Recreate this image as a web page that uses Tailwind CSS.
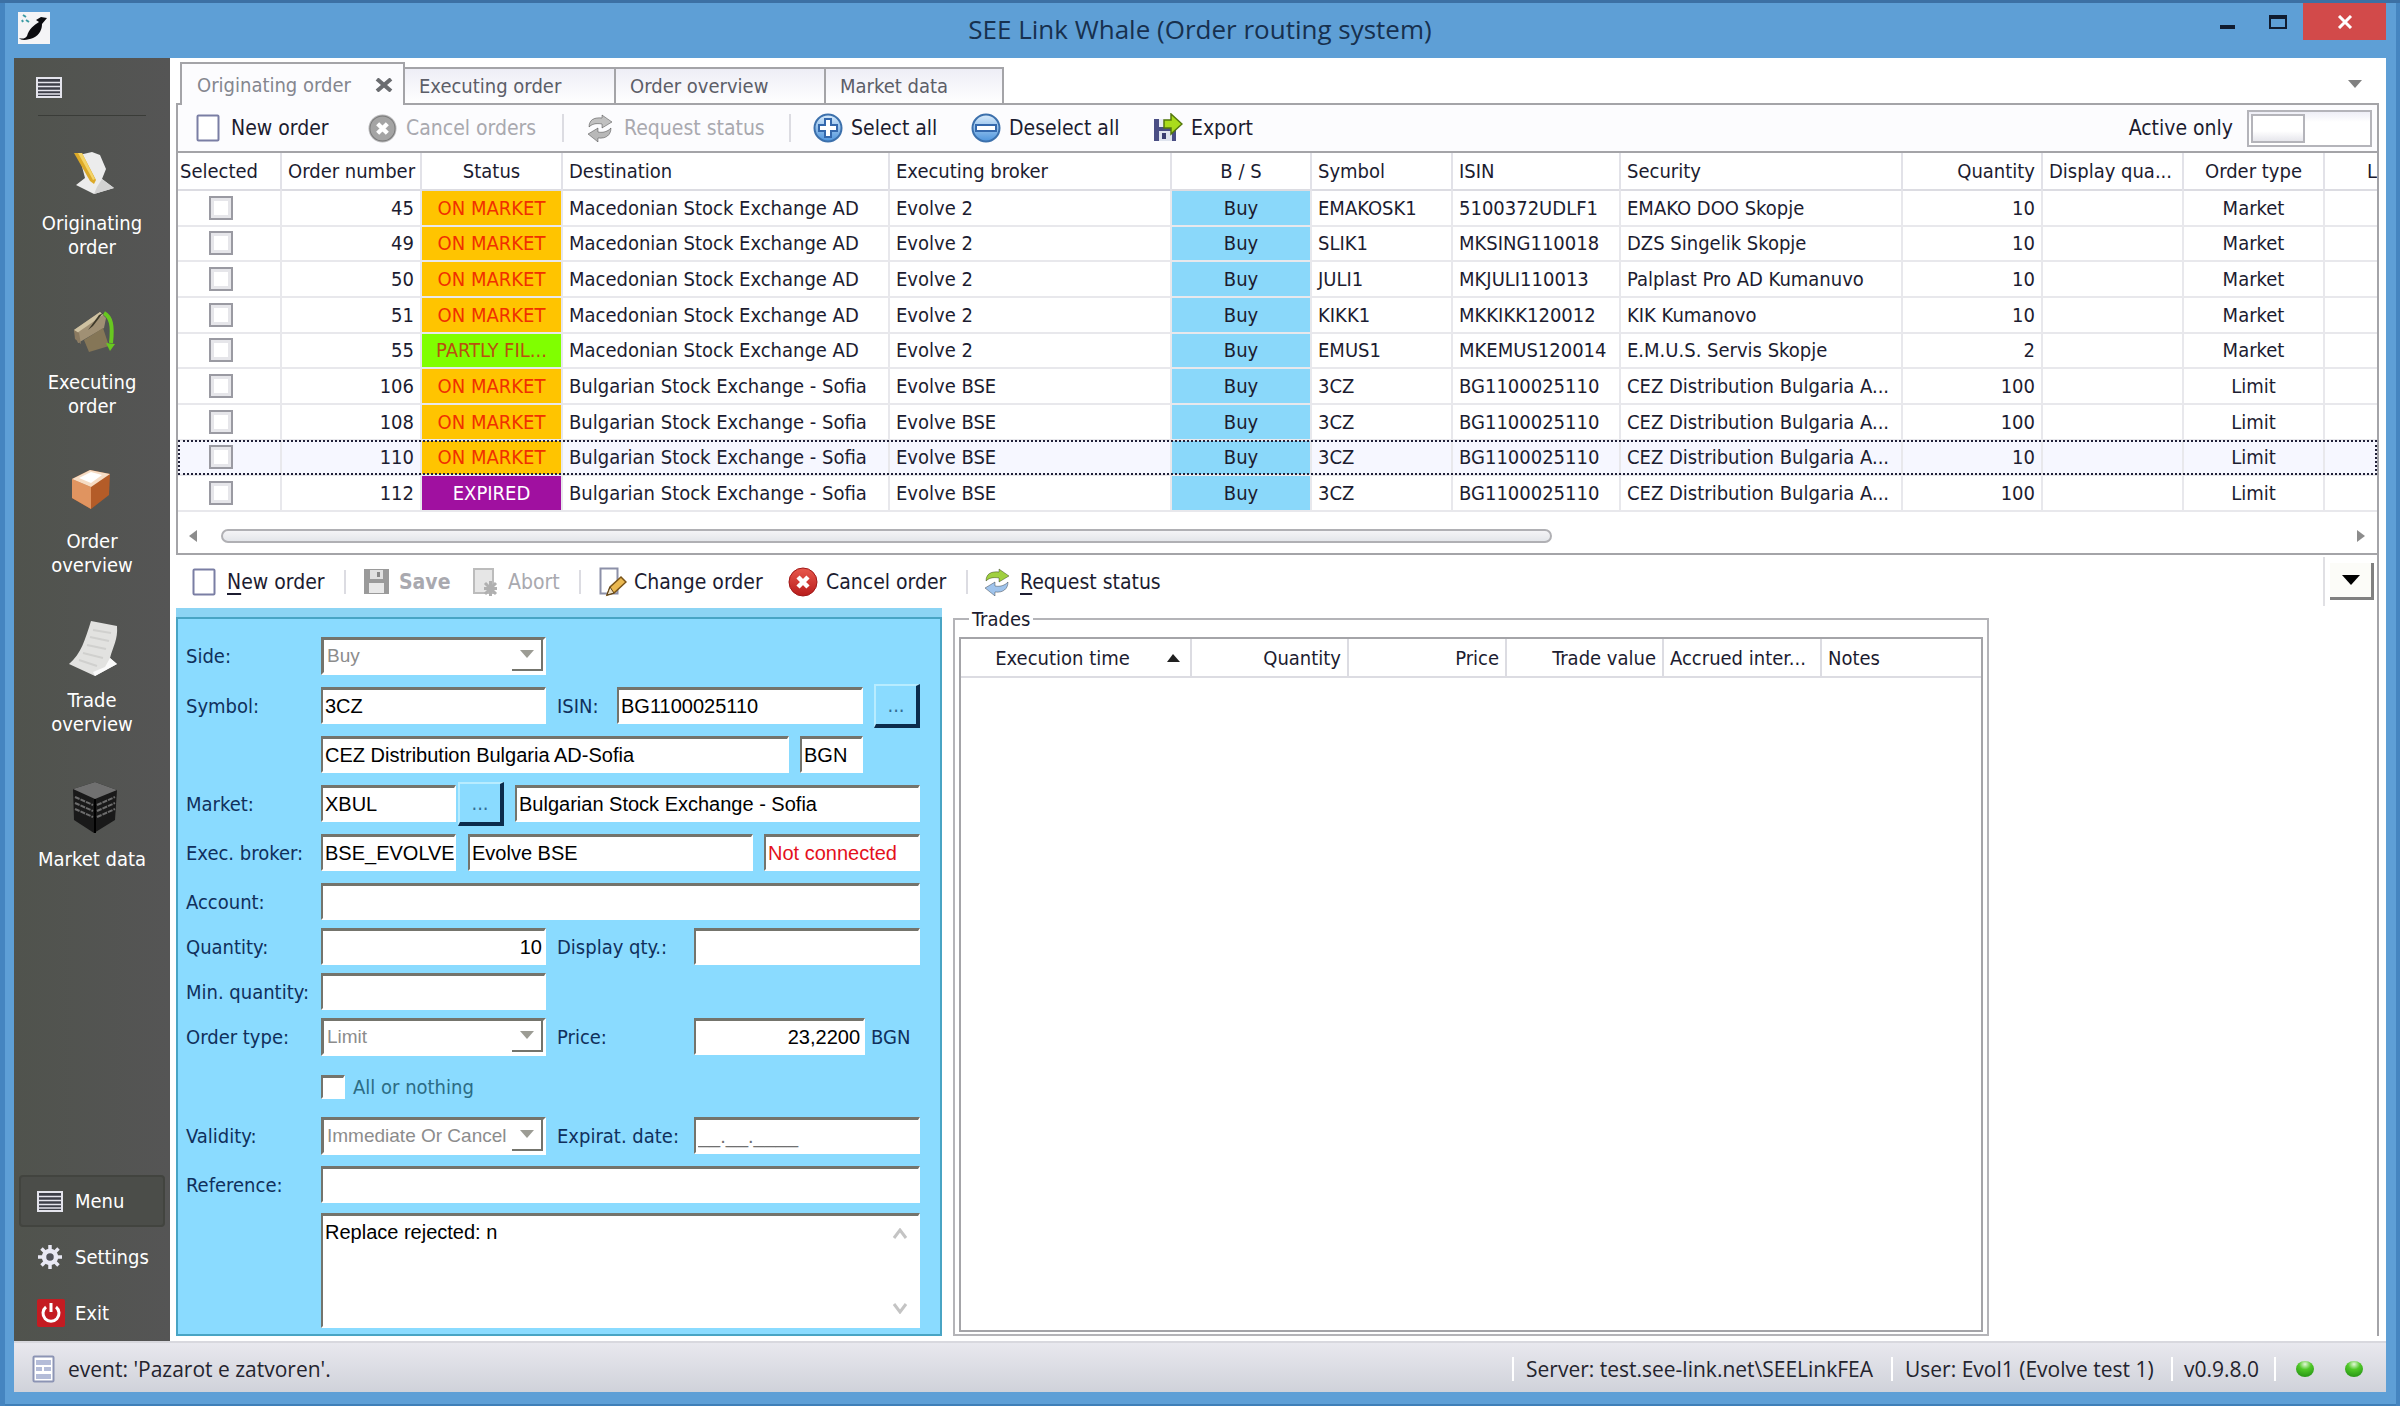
<!DOCTYPE html>
<html lang="en">

<head>
    <meta charset="UTF-8">
    <meta name="viewport" content="width=device-width, initial-scale=1.0">
    <title>SEE Link Whale (Order routing system)</title>
    <script src="https://cdn.jsdelivr.net/npm/@tailwindcss/browser@4"></script>
</head>

<body class="font-['DejaVu_Sans_Condensed','DejaVu_Sans',sans-serif] text-[20px] leading-6 text-[#1c1c30]">
    <!-- shared icons -->
    <svg class="absolute h-0 w-0">
        <defs>
            <linearGradient id="blueBall" x1="0" y1="0" x2="0" y2="1">
                <stop offset="0" stop-color="#d8ebfb" />
                <stop offset="1" stop-color="#4d94dc" />
            </linearGradient>
            <linearGradient id="redBall" x1="0" y1="0" x2="0" y2="1">
                <stop offset="0" stop-color="#e8584c" />
                <stop offset="1" stop-color="#b81c1c" />
            </linearGradient>
            <radialGradient id="greenBall" cx="50%" cy="20%" r="75%">
                <stop offset="0" stop-color="#e4f8d8" />
                <stop offset="0.45" stop-color="#50c828" />
                <stop offset="1" stop-color="#2c9c18" />
            </radialGradient>
        </defs>
        <symbol id="i-list" viewBox="0 0 26 21">
            <rect x="1" y="1" width="24" height="19" fill="#3c3e48" stroke="#e4e4ec" stroke-width="2" />
            <path d="M2 5.500h22M2 9.500h22M2 13.500h22M2 17h22" stroke="#e4e4ec" stroke-width="1.600" />
        </symbol>
        <symbol id="i-page" viewBox="0 0 24 28">
            <rect x="1.500" y="1.500" width="21" height="25" rx="1" fill="#fff" stroke="#7a7ea4" stroke-width="2" />
        </symbol>
        <symbol id="i-refresh" viewBox="0 0 26 28">
            <path d="M2 13C2 6 7 3 15 4V1l10 7-10 6v-4C9 9 5 10 2 13z" fill="currentColor" stroke="#0005" />
            <path class="text-(--second)" d="M24 14c0 7-5 11-13 10v4L1 20l10-6v4c6 1 10-1 13-4z" fill="currentColor" stroke="#0005" />
        </symbol>
        <symbol id="i-cross" viewBox="0 0 30 30">
            <circle cx="15" cy="15" r="13.500" fill="currentColor" stroke="#0004" stroke-width="2" />
            <path d="M10 10l10 10M20 10L10 20" stroke="#fff" stroke-width="4.500" />
        </symbol>
    </svg>

    <div class="flex min-h-screen flex-col border-t-[3px] border-[#3c70a4] bg-[#5e9fd6] shadow-[inset_5px_0_0_#4585c0,inset_-4px_0_0_#4585c0,inset_0_-3px_0_#3f7fb8]">
        <header class="grid h-[55px] grid-cols-[1fr_auto_1fr] px-[14px]">
            <div class="pt-[9px] pl-1">
                <svg class="h-[32px] w-[32px]" viewBox="0 0 32 32">
                    <rect width="32" height="32" fill="#f4f4f6" />
                    <path d="M1 26c2 3 9 2 14 0 7-3 9-9 9-14l5-6-6-1-5 3 3 2c-5 3-10 7-12 14-2 3-5 3-8 2z" fill="#0c0c10" />
                    <path d="M5 3l3 2M8 8l3 2M4 8l1 2" stroke="#3a9aa4" stroke-width="2" />
                </svg>
            </div>
            <h1 class="pt-[8px] font-['Open_Sans','Noto_Sans',sans-serif] text-[26px] leading-9 text-[#17304e]">SEE Link Whale (Order routing system)</h1>
            <div class="flex items-start justify-end">
                <button aria-label="Minimize" class="flex h-[37px] w-[48px] items-center justify-center">
                    <svg class="h-[16px] w-[18px]"><rect x="1" y="11" width="15" height="4" fill="#101c30" /></svg>
                </button>
                <button aria-label="Maximize" class="flex h-[37px] w-[51px] items-center justify-center">
                    <svg class="h-[16px] w-[20px]"><path d="M2 2h16v12H2z" fill="none" stroke="#101c30" stroke-width="2" /><path d="M1 3h18" stroke="#101c30" stroke-width="4" /></svg>
                </button>
                <button aria-label="Close" class="flex h-[37px] w-[83px] items-center justify-center bg-[#d24a4a]">
                    <svg class="h-[14px] w-[16px]"><path d="M2 1l12 12M14 1L2 13" stroke="#fff" stroke-width="3" /></svg>
                </button>
            </div>
        </header>

        <div class="mx-[14px] flex flex-1 bg-white">
            <nav class="flex w-[156px] shrink-0 flex-col bg-linear-to-r from-[#50534d] to-[#555555] text-white">
                <button aria-label="Collapse menu" class="mt-[19px] ml-[22px] h-[21px] w-[26px]"><svg class="h-[21px] w-[26px]"><use href="#i-list" /></svg></button>
                <hr class="mx-[24px] mt-[17px] mb-[25px] border-[#3a3c38]">

                <button class="flex h-[159px] flex-col items-center gap-[10px]">
                    <svg class="h-[60px] w-[60px]" viewBox="0 0 60 60">
                        <path d="M17 14L30 11L38 14L44 28L40 38L52 47L32 53L14 44L23 37z" fill="#ececec" />
                        <path d="M32 53l20-6-12-9-5 8z" fill="#d2d2d2" />
                        <path d="M12 12l8 0 14 27-2 4-4-3z" fill="#dca928" />
                        <path d="M16 12l4 0 13 26-2 1z" fill="#f4d468" />
                    </svg>
                    <span>Originating<br>order</span>
                </button>
                <button class="flex h-[159px] flex-col items-center gap-[10px]">
                    <svg class="h-[60px] w-[60px]" viewBox="0 0 60 60">
                        <path d="M12 30l26-18 6 6-2 10-26 15z" fill="#a09074" />
                        <path d="M12 30l26-18 3 3-26 18z" fill="#cfc2a2" />
                        <path d="M12 30l5 3 2 11-6-5z" fill="#8b7a60" />
                        <path d="M22 40l19-12 6 18-20 6z" fill="#857657" />
                        <path d="M26 30l5-4 10-13-4 2z" fill="#3e3a2a" />
                        <path d="M42 13c7 4 9 12 7 30" fill="none" stroke="#68c820" stroke-width="4" />
                        <path d="M44 43l9 1-5 7z" fill="#68c820" />
                    </svg>
                    <span>Executing<br>order</span>
                </button>
                <button class="flex h-[159px] flex-col items-center gap-[10px]">
                    <svg class="h-[60px] w-[60px]" viewBox="0 0 60 60">
                        <path d="M10 20L28 11L48 15L47 36L29 50L10 39z" fill="#b45c28" />
                        <path d="M10 20l19 8v22L10 39z" fill="#e09460" />
                        <path d="M10 20L28 11L48 15L29 28z" fill="#f6dcc4" />
                        <path d="M17 19l12-6 11 3-11 8z" fill="#fff" />
                    </svg>
                    <span>Order<br>overview</span>
                </button>
                <button class="flex h-[159px] flex-col items-center gap-[10px]">
                    <svg class="h-[60px] w-[60px]" viewBox="0 0 60 60">
                        <path d="M29 3l26 5c1 14-4 20-7 32l7 6-22 12L7 46C19 36 23 22 29 3z" fill="#e2e2e0" />
                        <path d="M48 40l7 6-22 12-2-4 12-5z" fill="#fafafa" />
                        <path d="M31 12l18 3M28 19l19 4M25 27l19 4M21 35l20 5M17 42l18 6" stroke="#d0d0ce" stroke-width="2" />
                    </svg>
                    <span>Trade<br>overview</span>
                </button>
                <button class="flex h-[135px] flex-col items-center gap-[10px]">
                    <svg class="h-[60px] w-[60px]" viewBox="0 0 60 60">
                        <path d="M11 12L33 5L55 13L53 43L32 56L12 43z" fill="#191919" />
                        <path d="M11 12L33 5L55 13L33 22z" fill="#707070" />
                        <path d="M13 20l18 8M13 26l18 8M13 32l18 8M35 28l18-8M35 34l18-8M35 40l18-8" stroke="#6c6c6c" stroke-width="2" stroke-dasharray="5 1" />
                        <path d="M33 22v34" stroke="#000" stroke-width="2" />
                    </svg>
                    <span>Market data</span>
                </button>

                <div class="mt-auto flex flex-col gap-1 px-[5px] pb-0.5">
                    <button class="flex h-[52px] items-center gap-[12px] rounded-sm border-2 border-[#42443f] bg-[#4b4d49] pl-[16px]">
                        <svg class="h-[21px] w-[26px]"><use href="#i-list" /></svg>Menu
                    </button>
                    <button class="flex h-[52px] items-center gap-[12px] pl-[18px]">
                        <svg class="h-[26px] w-[26px]" viewBox="0 0 26 26">
                            <path d="M13 1v24M1 13h24M4.500 4.500l17 17M21.500 4.500l-17 17" stroke="#e8e8f4" stroke-width="3.500" />
                            <circle cx="13" cy="13" r="6" fill="#50525a" stroke="#e8e8f4" stroke-width="4.500" />
                        </svg>Settings
                    </button>
                    <button class="flex h-[52px] items-center gap-[10px] pl-[18px]">
                        <svg class="h-[28px] w-[28px]" viewBox="0 0 28 28">
                            <rect width="28" height="28" rx="2" fill="#c41c22" />
                            <path d="M9 8a8 8 0 1 0 10 0" fill="none" stroke="#fff" stroke-width="3" />
                            <path d="M14 4v9" stroke="#fff" stroke-width="3" />
                        </svg>Exit
                    </button>
                </div>
            </nav>

            <main class="flex min-w-0 flex-1 flex-col pt-1 pr-[7px] pb-[5px] pl-[6px]">
                <!-- tabs -->
                <div class="flex h-[43px] items-end border-b-2 border-[#a4a4a8] pl-[4px] text-[#5c5e68]">
                    <button class="-mb-0.5 flex h-[43px] w-[225px] items-center justify-between border-2 border-b-0 border-[#a4a4a8] bg-[#fcfcfe] pr-[10px] pl-[15px] text-[#84868e]">
                        Originating order
                        <svg class="h-[14px] w-[18px]" viewBox="0 0 18 14"><path d="M2 1l14 12M16 1L2 13" stroke="#6a6c70" stroke-width="4" /></svg>
                    </button>
                    <button class="h-[36px] w-[211px] border-t-2 border-r-2 border-[#a4a4a8] bg-linear-to-b from-[#eeeef6] to-white pl-[14px] text-left">Executing order</button>
                    <button class="h-[36px] w-[210px] border-t-2 border-r-2 border-[#a4a4a8] bg-linear-to-b from-[#eeeef6] to-white pl-[14px] text-left">Order overview</button>
                    <button class="h-[36px] w-[178px] border-t-2 border-r-2 border-[#a4a4a8] bg-linear-to-b from-[#eeeef6] to-white pl-[14px] text-left">Market data</button>
                    <button aria-label="Tab list" class="mr-[17px] mb-[15px] ml-auto"><svg class="h-[8px] w-[14px]"><path d="M0 0h14l-7 8z" fill="#808080" /></svg></button>
                </div>

                <section class="border-x-2 border-b-2 border-[#a4a4a8]">
                    <div class="flex h-[46px] items-center bg-[#fcfcfe] pl-[18px] text-[21px]">
                        <button class="flex w-[172px] items-center gap-[11px]"><svg class="h-[28px] w-[24px]"><use href="#i-page" /></svg>New order</button>
                        <button disabled class="flex w-[194px] items-center gap-[9px] text-[#a9a9af]"><svg class="h-[29px] w-[29px] text-[#a4a4a4]"><use href="#i-cross" /></svg>Cancel orders</button>
                        <span class="h-[28px] w-0.5 bg-[#dcdce2]"></span>
                        <button disabled class="ml-[23px] flex w-[202px] items-center gap-[11px] text-[#a9a9af]"><svg class="h-[28px] w-[26px] text-[#c0c0c0] [--second:#b8b8b8]"><use href="#i-refresh" /></svg>Request status</button>
                        <span class="h-[28px] w-0.5 bg-[#dcdce2]"></span>
                        <button class="ml-[22px] flex w-[158px] items-center gap-[8px]">
                            <svg class="h-[30px] w-[30px]" viewBox="0 0 30 30">
                                <circle cx="15" cy="15" r="13.500" fill="url(#blueBall)" stroke="#3c70ac" stroke-width="2" />
                                <path d="M12 6h6v6h6v6h-6v6h-6v-6H6v-6h6z" fill="#fff" stroke="#3468ac" stroke-width="2" />
                            </svg>Select all
                        </button>
                        <button class="flex w-[182px] items-center gap-[8px]">
                            <svg class="h-[30px] w-[30px]" viewBox="0 0 30 30">
                                <circle cx="15" cy="15" r="13.500" fill="url(#blueBall)" stroke="#3c70ac" stroke-width="2" />
                                <path d="M5 12h20v6H5z" fill="#fff" stroke="#3468ac" stroke-width="2" />
                            </svg>Deselect all
                        </button>
                        <button class="flex items-center gap-[8px]">
                            <svg class="h-[30px] w-[30px]" viewBox="0 0 30 30">
                                <path d="M1 6h22v22H1z" fill="#4a4e84" />
                                <path d="M6 6h12v8H6z" fill="#e8ecf4" />
                                <path d="M6 18h13v10H6z" fill="#dfe4ee" />
                                <path d="M9 20h4v6H9z" fill="#3a3e70" />
                                <path d="M11 7h7V1l11 10-11 10v-6h-7z" fill="#aadc1c" stroke="#54780c" stroke-width="1.500" />
                            </svg>Export
                        </button>
                        <label for="activeOnly" class="ml-auto">Active only</label>
                        <span class="relative mr-[5px] ml-[14px] h-[37px] w-[125px]">
                            <input id="activeOnly" type="checkbox" role="switch" class="h-full w-full appearance-none border-2 border-[#b4b4ba] bg-linear-to-b from-[#eeeef6] to-white to-30%">
                            <span class="pointer-events-none absolute top-1 left-1 h-[29px] w-[54px] border-2 border-[#b4b4ba] bg-linear-to-b from-white from-60% to-[#e6e6ec]"></span>
                        </span>
                    </div>

                    <div class="overflow-hidden border-t-2 border-[#a4a4a8]">
                        <table class="h-[359px] w-full table-fixed border-collapse whitespace-nowrap">
                            <colgroup>
                                <col class="w-[103px]"><col class="w-[140px]"><col class="w-[141px]"><col class="w-[327px]"><col class="w-[282px]">
                                <col class="w-[140px]"><col class="w-[141px]"><col class="w-[168px]"><col class="w-[282px]"><col class="w-[140px]">
                                <col class="w-[141px]"><col class="w-[141px]"><col>
                            </colgroup>
                            <thead>
                                <tr class="h-[37px] border-b-2 border-[#dcdce2] *:border-r-2 *:border-[#e2e2e8] *:px-[6px] *:font-normal">
                                    <th class="pl-[2px]! text-left">Selected</th>
                                    <th class="text-right">Order number</th>
                                    <th>Status</th>
                                    <th class="text-left">Destination</th>
                                    <th class="text-left">Executing broker</th>
                                    <th>B / S</th>
                                    <th class="text-left">Symbol</th>
                                    <th class="text-left">ISIN</th>
                                    <th class="text-left">Security</th>
                                    <th class="text-right">Quantity</th>
                                    <th class="text-left">Display qua...</th>
                                    <th>Order type</th>
                                    <th class="border-r-0! pr-0! text-right">L</th>
                                </tr>
                            </thead>
                            <tbody id="orders"></tbody>
                        </table>
                    </div>

                    <!-- horizontal scrollbar -->
                    <div class="flex h-[41px] items-center justify-between pt-[7px] pr-[12px] pl-[11px]">
                        <svg class="h-[12px] w-[8px]"><path d="M8 0v12L0 6z" fill="#8c8c8c" /></svg>
                        <div class="mx-[24px] flex-1"><div class="h-[14px] w-[63%] rounded-full border-2 border-[#b0b0b4] bg-linear-to-b from-[#f4f4f6] to-[#e4e6ea]"></div></div>
                        <svg class="h-[12px] w-[8px]"><path d="M0 0v12l8-6z" fill="#8c8c8c" /></svg>
                    </div>
                </section>

                <section class="flex flex-1 flex-col border-r-2 border-[#a4a4a8]">
                    <div class="flex h-[53px] items-center pl-[16px] text-[21px]">
                        <button class="flex w-[152px] items-center gap-[11px]"><svg class="h-[28px] w-[24px]"><use href="#i-page" /></svg><span><u class="underline-offset-4">N</u>ew order</span></button>
                        <span class="h-[24px] w-0.5 bg-[#dcdce2]"></span>
                        <button disabled class="ml-[17px] flex w-[110px] items-center gap-[9px] font-bold text-[#a9a9af]">
                            <svg class="h-[27px] w-[27px]" viewBox="0 0 27 27">
                                <path d="M1 1h25v25H1z" fill="#9a9a9a" />
                                <path d="M7 2h13v9H7z" fill="#e0e0e0" />
                                <path d="M14 4h3v5h-3z" fill="#888" />
                                <path d="M6 15h15v10H6z" fill="#e8e8e8" />
                            </svg>Save
                        </button>
                        <button disabled class="flex w-[106px] items-center gap-[9px] text-[#a9a9af]">
                            <svg class="h-[28px] w-[26px]" viewBox="0 0 26 28">
                                <path d="M1 1h19v24H1z" fill="#e6e6e6" stroke="#bcbcbc" stroke-width="2" />
                                <path d="M12 15l11 11M23 15L12 26M17.500 13v15M11 20.500h13" stroke="#b0b0b0" stroke-width="3" />
                            </svg>Abort
                        </button>
                        <span class="h-[24px] w-0.5 bg-[#dcdce2]"></span>
                        <button class="ml-[18px] flex w-[189px] items-center gap-[7px]">
                            <svg class="h-[30px] w-[28px]" viewBox="0 0 28 30">
                                <path d="M1.500 1.500h17v25h-17z" fill="#fff" stroke="#8c90a8" stroke-width="2" />
                                <path d="M8 28l3-8 11-10 5 5-12 11z" fill="#eab850" stroke="#7a5418" stroke-width="1.500" />
                                <path d="M8 28l3-8 4 6z" fill="#eee0c4" stroke="#5c4014" />
                            </svg>Change order
                        </button>
                        <button class="flex w-[178px] items-center gap-[8px]">
                            <svg class="h-[30px] w-[30px]" viewBox="0 0 30 30">
                                <circle cx="15" cy="15" r="14" fill="url(#redBall)" stroke="#a01818" />
                                <path d="M10 10l10 10M20 10L10 20" stroke="#fff" stroke-width="4.500" />
                            </svg>Cancel order
                        </button>
                        <span class="h-[24px] w-0.5 bg-[#dcdce2]"></span>
                        <button class="ml-[16px] flex items-center gap-[10px]"><svg class="h-[28px] w-[26px] text-[#a0d040] [--second:#a0c4ec]"><use href="#i-refresh" /></svg><span><u class="underline-offset-4">R</u>equest status</span></button>
                        <div class="mr-[3px] ml-auto border-l-2 border-[#e0e0e4] py-[6px] pl-[5px]">
                            <button aria-label="Toolbar options" class="flex h-[37px] w-[44px] items-center justify-center border-r-3 border-b-3 border-[#808080] bg-[#fcfcf8]">
                                <svg class="h-[10px] w-[18px]"><path d="M0 0h18l-9 10z" fill="#000" /></svg>
                            </button>
                        </div>
                    </div>

                    <div class="flex flex-1 items-stretch">
                        <!-- order ticket -->
                        <form class="flex w-[766px] shrink-0 flex-col border-t-9 border-[#8cd4f4] bg-[#8adbff] text-[#10305c]">
                            <div class="flex flex-1 flex-col border-2 border-[#48a4c4] px-[8px] pt-[18px] pb-[6px] *:flex *:h-[37px] *:items-center
                                [&_input:not([type=checkbox])]:h-[37px] [&_input]:border-2 [&_input]:border-t-3 [&_input]:border-white [&_input]:border-t-[#74746c] [&_input]:border-l-[#74746c] [&_input]:bg-white
                                [&_input]:pl-0.5 [&_input]:font-['Liberation_Sans',Arial,sans-serif] [&_input]:text-black
                                [&_select]:h-[38px] [&_select]:w-full [&_select]:appearance-none [&_select]:border-3 [&_select]:border-white [&_select]:border-t-[#74746c] [&_select]:border-l-[#74746c] [&_select]:bg-white [&_select]:pl-[3px] [&_select]:font-['Liberation_Sans',Arial,sans-serif] [&_select]:text-[19px] [&_select]:text-[#8c8c8c] [&_select]:opacity-100">
                                <div>
                                    <label for="side" class="w-[135px]">Side:</label>
                                    <span class="relative w-[225px]">
                                        <select id="side" disabled><option>Buy</option></select>
                                        <span class="pointer-events-none absolute top-[3px] right-[3px] flex h-[31px] w-[31px] items-center justify-center border-r-2 border-b-2 border-[#74746c] bg-white"><svg class="h-[8px] w-[14px]"><path d="M0 0h14l-7 8z" fill="#9c9c94" /></svg></span>
                                    </span>
                                </div>
                                <div class="mt-[13px]">
                                    <label for="symbol" class="w-[135px]">Symbol:</label>
                                    <input id="symbol" value="3CZ" class="w-[225px]">
                                    <label for="isin" class="ml-[11px] w-[60px]">ISIN:</label>
                                    <input id="isin" value="BG1100025110" class="w-[246px]">
                                    <button type="button" class="ml-[11px] h-[44px] w-[46px] border-2 border-r-4 border-b-4 border-[#b8ecff] border-r-[#0c2c4c] border-b-[#0c2c4c] text-[#346c94]">...</button>
                                </div>
                                <div class="mt-[12px] pl-[135px]">
                                    <input aria-label="Security name" value="CEZ Distribution Bulgaria AD-Sofia" class="w-[468px]">
                                    <input aria-label="Currency" value="BGN" class="ml-[11px] w-[63px]">
                                </div>
                                <div class="mt-[12px]">
                                    <label for="market" class="w-[135px]">Market:</label>
                                    <input id="market" value="XBUL" class="w-[135px]">
                                    <button type="button" class="ml-0.5 h-[44px] w-[46px] border-2 border-r-4 border-b-4 border-[#b8ecff] border-r-[#0c2c4c] border-b-[#0c2c4c] text-[#346c94]">...</button>
                                    <input aria-label="Market name" value="Bulgarian Stock Exchange - Sofia" class="ml-[11px] w-[405px]">
                                </div>
                                <div class="mt-[12px]">
                                    <label for="broker" class="w-[135px]">Exec. broker:</label>
                                    <input id="broker" value="BSE_EVOLVE" class="w-[135px]">
                                    <input aria-label="Broker name" value="Evolve BSE" class="ml-[12px] w-[285px]">
                                    <input aria-label="Broker status" value="Not connected" class="ml-[11px] w-[156px] text-[#e4101c]!">
                                </div>
                                <div class="mt-[12px]">
                                    <label for="account" class="w-[135px]">Account:</label>
                                    <input id="account" class="w-[599px]">
                                </div>
                                <div class="mt-[8px]">
                                    <label for="quantity" class="w-[135px]">Quantity:</label>
                                    <input id="quantity" value="10" class="w-[225px] pr-0.5 text-right">
                                    <label for="displayQty" class="ml-[11px] w-[137px]">Display qty.:</label>
                                    <input id="displayQty" class="w-[226px]">
                                </div>
                                <div class="mt-[8px]">
                                    <label for="minQuantity" class="w-[135px] whitespace-nowrap">Min. quantity:</label>
                                    <input id="minQuantity" class="w-[225px]">
                                </div>
                                <div class="mt-[8px]">
                                    <label for="orderType" class="w-[135px]">Order type:</label>
                                    <span class="relative w-[225px]">
                                        <select id="orderType" disabled><option>Limit</option></select>
                                        <span class="pointer-events-none absolute top-[3px] right-[3px] flex h-[31px] w-[31px] items-center justify-center border-r-2 border-b-2 border-[#74746c] bg-white"><svg class="h-[8px] w-[14px]"><path d="M0 0h14l-7 8z" fill="#9c9c94" /></svg></span>
                                    </span>
                                    <label for="price" class="ml-[11px] w-[137px]">Price:</label>
                                    <input id="price" value="23,2200" class="w-[171px] pr-[3px] text-right">
                                    <span class="ml-[6px]">BGN</span>
                                </div>
                                <div class="mt-[13px] pl-[135px]">
                                    <input id="allOrNothing" type="checkbox" disabled class="h-[24px] w-[24px] appearance-none">
                                    <label for="allOrNothing" class="ml-[8px] text-[#2c6c84]">All or nothing</label>
                                </div>
                                <div class="mt-[12px]">
                                    <label for="validity" class="w-[135px]">Validity:</label>
                                    <span class="relative w-[225px]">
                                        <select id="validity" disabled><option>Immediate Or Cancel</option></select>
                                        <span class="pointer-events-none absolute top-[3px] right-[3px] flex h-[31px] w-[31px] items-center justify-center border-r-2 border-b-2 border-[#74746c] bg-white"><svg class="h-[8px] w-[14px]"><path d="M0 0h14l-7 8z" fill="#9c9c94" /></svg></span>
                                    </span>
                                    <label for="expiration" class="ml-[11px] w-[137px] whitespace-nowrap">Expirat. date:</label>
                                    <input id="expiration" value="__.__.____" class="w-[226px] text-[#707070]!">
                                </div>
                                <div class="mt-[12px]">
                                    <label for="reference" class="w-[135px]">Reference:</label>
                                    <input id="reference" class="w-[599px]">
                                </div>
                                <div class="mt-[10px] ml-[135px] h-[115px]! w-[599px] items-stretch! border-2 border-t-3 border-white border-t-[#74746c] border-l-[#74746c] bg-white">
                                    <textarea aria-label="Message" class="flex-1 resize-none pt-0.5 pl-0.5 font-['Liberation_Sans',Arial,sans-serif] leading-7 text-black outline-none">Replace rejected: n</textarea>
                                    <div class="flex w-[36px] flex-col items-center justify-between py-[12px]">
                                        <svg class="h-[11px] w-[16px]"><path d="M2 10l6-8 6 8" fill="none" stroke="#c4c4c4" stroke-width="3" /></svg>
                                        <svg class="h-[11px] w-[16px]"><path d="M2 1l6 8 6-8" fill="none" stroke="#c4c4c4" stroke-width="3" /></svg>
                                    </div>
                                </div>
                            </div>
                        </form>

                        <!-- trades -->
                        <fieldset class="-mt-px ml-[11px] flex w-[1036px] flex-col border-2 border-[#b4b4b8] px-[4px] pb-[2px]">
                            <legend class="ml-[10px] px-[3px]">Trades</legend>
                            <div class="mt-[6px] flex-1 border-2 border-[#a4a4a8]">
                                <table class="w-full table-fixed border-collapse whitespace-nowrap">
                                    <colgroup><col class="w-[230px]"><col class="w-[157px]"><col class="w-[158px]"><col class="w-[157px]"><col class="w-[158px]"><col></colgroup>
                                    <thead>
                                        <tr class="h-[38px] border-b-2 border-[#dcdce2] *:border-r-2 *:border-[#dcdce2] *:px-[6px] *:font-normal">
                                            <th><span class="flex items-center"><span class="flex-1 pr-[9px]">Execution time</span><svg class="mr-[4px] h-[8px] w-[13px]"><path d="M0 8h13L6 0z" fill="#202020" /></svg></span></th>
                                            <th class="text-right">Quantity</th>
                                            <th class="text-right">Price</th>
                                            <th class="text-right">Trade value</th>
                                            <th class="text-left">Accrued inter...</th>
                                            <th class="border-r-0! text-left">Notes</th>
                                        </tr>
                                    </thead>
                                </table>
                            </div>
                        </fieldset>
                    </div>
                </section>
            </main>
        </div>

        <footer class="mx-[14px] mb-[15px] flex h-[51px] items-center border-t-2 border-[#d8d8de] bg-linear-to-b from-[#e8e8ee] to-[#d0d2da] pt-[3px] pl-[18px] font-['Open_Sans','Noto_Sans',sans-serif] text-[21px] text-[#24242e]">
            <svg class="mr-[13px] h-[28px] w-[23px]" viewBox="0 0 23 28">
                <rect x="1.500" y="1.500" width="20" height="25" rx="1" fill="#fff" stroke="#8c94b4" stroke-width="2" />
                <path d="M4 5h15v5H4zM4 12h6v4H4zM12 12h7v4h-7zM4 19h15v5H4z" fill="#b4bcd8" />
            </svg>
            <span>event: 'Pazarot e zatvoren'.</span>
            <span class="ml-auto w-[379px] border-l-2 border-white pl-[12px]">Server: test.see-link.net\SEELinkFEA</span>
            <span class="w-[280px] border-l-2 border-white pl-[12px]">User: Evol1 (Evolve test 1)</span>
            <span class="w-[103px] border-l-2 border-white pl-[11px]">v0.9.8.0</span>
            <span class="flex w-[112px] items-center gap-[31px] border-l-2 border-white py-1 pl-[20px]">
                <svg class="h-[16px] w-[18px]" viewBox="0 0 18 16"><ellipse cx="9" cy="8" rx="9" ry="8" fill="url(#greenBall)" /></svg>
                <svg class="h-[16px] w-[18px]" viewBox="0 0 18 16"><ellipse cx="9" cy="8" rx="9" ry="8" fill="url(#greenBall)" /></svg>
            </span>
        </footer>
    </div>

    <script>
        const mse = "Macedonian Stock Exchange AD"
        const bse = "Bulgarian Stock Exchange - Sofia"
        const cez = "CEZ Distribution Bulgaria A..."

        const orders = [
            [45, "ON MARKET", mse, "Evolve 2", "EMAKOSK1", "5100372UDLF1", "EMAKO DOO Skopje", 10, "Market"],
            [49, "ON MARKET", mse, "Evolve 2", "SLIK1", "MKSING110018", "DZS Singelik Skopje", 10, "Market"],
            [50, "ON MARKET", mse, "Evolve 2", "JULI1", "MKJULI110013", "Palplast Pro AD Kumanuvo", 10, "Market"],
            [51, "ON MARKET", mse, "Evolve 2", "KIKK1", "MKKIKK120012", "KIK Kumanovo", 10, "Market"],
            [55, "PARTLY FIL...", mse, "Evolve 2", "EMUS1", "MKEMUS120014", "E.M.U.S. Servis Skopje", 2, "Market"],
            [106, "ON MARKET", bse, "Evolve BSE", "3CZ", "BG1100025110", cez, 100, "Limit"],
            [108, "ON MARKET", bse, "Evolve BSE", "3CZ", "BG1100025110", cez, 100, "Limit"],
            [110, "ON MARKET", bse, "Evolve BSE", "3CZ", "BG1100025110", cez, 10, "Limit"],
            [112, "EXPIRED", bse, "Evolve BSE", "3CZ", "BG1100025110", cez, 100, "Limit"],
        ]

        const statusClass = {
            "ON MARKET": "bg-[#ffc400] text-[#f03000]",
            "PARTLY FIL...": "bg-[#80ff00] text-[#b85010]",
            "EXPIRED": "bg-[#a010a0] text-white",
        }

        const tbody = document.getElementById("orders")
        orders.forEach(([no, status, dest, broker, symbol, isin, security, qty, type]) => {
            const tr = document.createElement("tr")
            tr.className = "border-b-2 border-[#e8e8ec] *:border-r-2 *:border-[#e8e8ec] *:px-[6px]"
            if (no === 110) {
                tr.classList.add("bg-[#f6f7ff]", "outline-2", "-outline-offset-2", "outline-dotted", "outline-[#202038]")
            }
            tr.innerHTML = `
                <td><input type="checkbox" aria-label="Select order ${no}" class="mx-auto block h-[24px] w-[24px] -translate-x-2 appearance-none border-2 border-[#9a9aa2] bg-white shadow-[inset_0_0_0_3px_#e6e6ea]"></td>
                <td class="text-right">${no}</td>
                <td class="px-[3px]! text-center ${statusClass[status]}">${status}</td>
                <td>${dest}</td>
                <td>${broker}</td>
                <td class="bg-[#8ad8fa] text-center">Buy</td>
                <td>${symbol}</td>
                <td>${isin}</td>
                <td>${security}</td>
                <td class="text-right">${qty}</td>
                <td></td>
                <td class="text-center">${type}</td>
                <td class="border-r-0!"></td>`
            tbody.appendChild(tr)
        })
    </script>
</body>

</html>
